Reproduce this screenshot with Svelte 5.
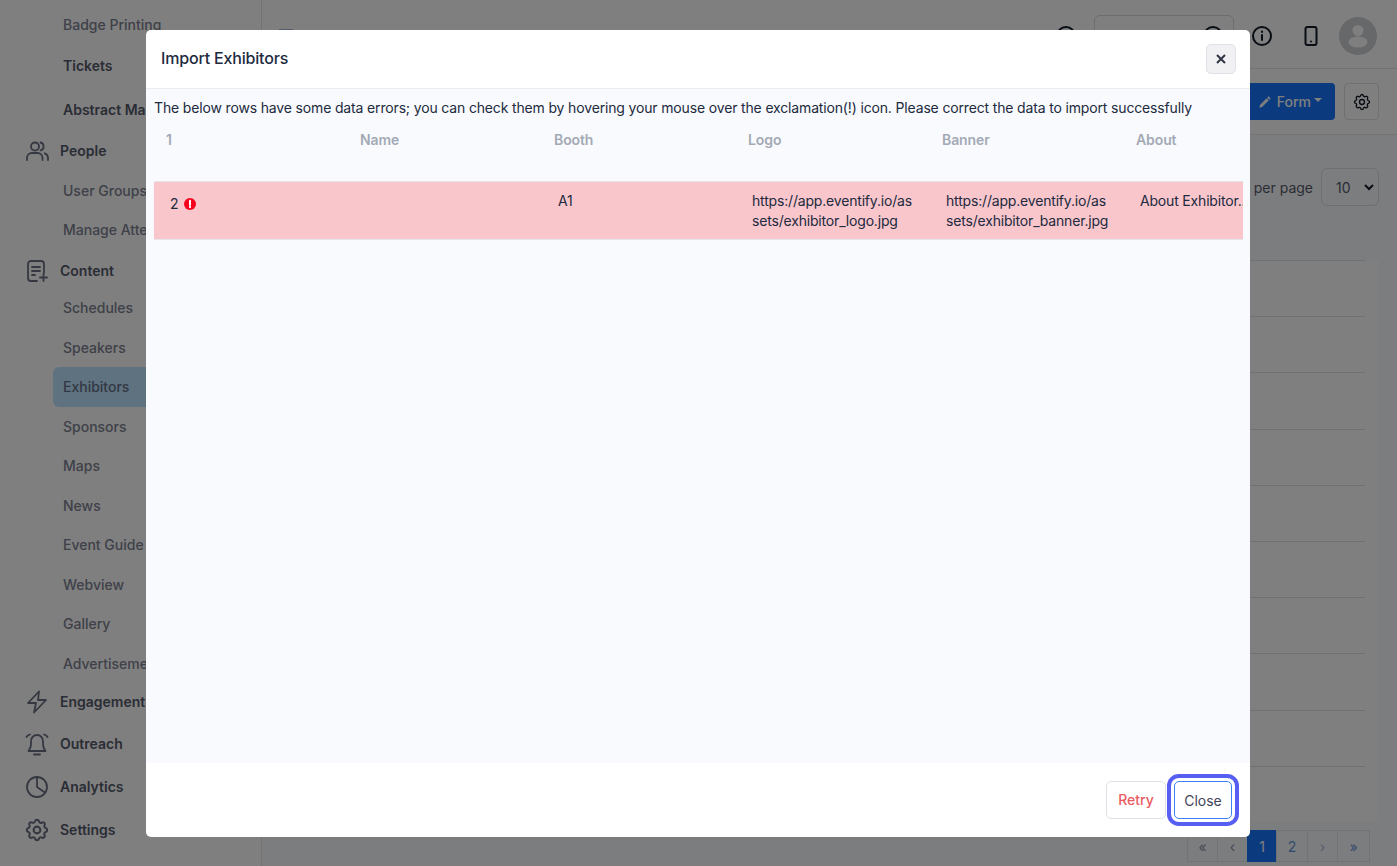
<script>
	const subTop = ["Badge Printing"];
	const people = ["User Groups", "Manage Attendees"];
	const content = ["Schedules", "Speakers", "Exhibitors", "Sponsors", "Maps", "News", "Event Guide", "Webview", "Gallery", "Advertisements"];
	const headers = ["1", "Name", "Booth", "Logo", "Banner", "About"];
	const rows = Array.from({ length: 10 });
	const pages = ["«", "‹", "1", "2", "›", "»"];
</script>

<div class="page">
	<aside class="sidebar">
		<div class="sub first">{subTop[0]}</div>
		<div class="plain tickets">Tickets</div>
		<div class="plain abstract">Abstract Management</div>

		<div class="top people">
			<svg viewBox="0 0 24 24"><circle cx="10" cy="7.500" r="4"/><path d="M2 21v-2a5 5 0 0 1 5-5h5.500a5 5 0 0 1 5 5v2M15.500 3.500a4 4 0 0 1 0 7.800M23 21v-2a5 5 0 0 0-3.200-4.700"/></svg>
			<span>People</span>
		</div>
		{#each people as item}
			<div class="sub">{item}</div>
		{/each}

		<div class="top content">
			<svg viewBox="0 0 24 24"><path d="M12 22H6a3 3 0 0 1-3-3V5a3 3 0 0 1 3-3h10a3 3 0 0 1 3 3v9M7 8h8M7 12h8M7 16h3M15 18.500h7M18.500 15v7"/></svg>
			<span>Content</span>
		</div>
		<div class="content-list">
			{#each content as item}
				<div class="sub" class:active={item === "Exhibitors"}>{item}</div>
			{/each}
		</div>

		<div class="top eng">
			<svg viewBox="0 0 24 24"><path d="M14 1.500L3 13h8l-2 9.500L21 10h-8z"/></svg>
			<span>Engagement</span>
		</div>
		<div class="top">
			<svg viewBox="0 0 24 24"><path d="M12 3a6 6 0 0 1 6 6v3.500c0 2.500 1 4.500 2.500 6.500h-17C5 17 6 15 6 12.500V9a6 6 0 0 1 6-6zM9 22.500h6M1.500 5C2 4 3 3 5 2.500M22.500 5C22 4 21 3 19 2.500"/></svg>
			<span>Outreach</span>
		</div>
		<div class="top">
			<svg viewBox="0 0 24 24"><circle cx="12" cy="12" r="10"/><path d="M12 2v10l8.200 5.800"/></svg>
			<span>Analytics</span>
		</div>
		<div class="top">
			<svg viewBox="0 0 24 24"><g transform="translate(12 12) scale(1.130) translate(-12 -12)"><path d="M10.300 4.300c.4-1.800 3-1.800 3.400 0a1.700 1.700 0 0 0 2.600 1.100c1.500-.9 3.300.8 2.400 2.400a1.700 1.700 0 0 0 1 2.500c1.800.4 1.800 3 0 3.400a1.700 1.700 0 0 0-1 2.600c.9 1.500-.9 3.300-2.400 2.400a1.700 1.700 0 0 0-2.600 1c-.4 1.800-3 1.800-3.400 0a1.700 1.700 0 0 0-2.600-1c-1.500.9-3.300-.9-2.400-2.400a1.700 1.700 0 0 0-1-2.600c-1.800-.4-1.800-3 0-3.400a1.700 1.700 0 0 0 1-2.500c-.9-1.600.9-3.300 2.400-2.400 1 .6 2.300.1 2.600-1.100z"/><circle cx="12" cy="12" r="3"/></g></svg>
			<span>Settings</span>
		</div>
	</aside>

	<main class="main">
		<header class="topbar">
			<svg class="menu" viewBox="0 0 24 24"><path d="M3 5h14M3 12h14M3 19h14"/></svg>
			<div class="spacer"></div>
			<svg class="tb-icon search-ic" viewBox="0 0 24 24"><circle cx="12" cy="12" r="9"/></svg>
			<div class="search"><svg viewBox="0 0 24 24"><circle cx="12" cy="12" r="9"/></svg></div>
			<svg class="tb-icon info" viewBox="0 0 24 24"><circle cx="12" cy="12" r="9"/><path d="M12 11v5M12 7.500v.5"/></svg>
			<svg class="tb-icon phone" viewBox="0 0 24 24"><rect x="6.500" y="3" width="11" height="18" rx="2"/><path d="M12 17.500v.1"/></svg>
			<div class="avatar">
				<svg viewBox="0 0 38 38"><circle cx="19" cy="13.500" r="5.500"/><ellipse cx="19" cy="25" rx="9.500" ry="5.500"/></svg>
			</div>
		</header>

		<div class="toolbar">
			<button class="form-btn">
				<svg viewBox="0 0 16 16"><path d="M12.100 1.500l2.400 2.400-1.500 1.500-2.400-2.400zM9.900 3.700l2.400 2.400-7.600 7.600-3.200.8.800-3.200z"/></svg>
				Form
				<i class="caret"></i>
			</button>
			<button class="gear-btn">
				<svg viewBox="0 0 24 24"><path d="M10.300 4.300c.4-1.800 3-1.800 3.400 0a1.700 1.700 0 0 0 2.600 1.100c1.500-.9 3.300.8 2.400 2.400a1.700 1.700 0 0 0 1 2.500c1.800.4 1.800 3 0 3.400a1.700 1.700 0 0 0-1 2.600c.9 1.500-.9 3.300-2.400 2.400a1.700 1.700 0 0 0-2.600 1c-.4 1.800-3 1.800-3.400 0a1.700 1.700 0 0 0-2.600-1c-1.500.9-3.300-.9-2.400-2.400a1.700 1.700 0 0 0-1-2.600c-1.800-.4-1.800-3 0-3.400a1.700 1.700 0 0 0 1-2.500c-.9-1.600.9-3.300 2.400-2.400 1 .6 2.300.1 2.600-1.100z"/><circle cx="12" cy="12" r="3"/></svg>
			</button>
		</div>

		<div class="filters">
			<span>Exhibitors per page</span>
			<div class="select">10<svg viewBox="0 0 12 12"><path d="M2 4l4 4 4-4"/></svg></div>
		</div>

		<div class="list">
			{#each rows as _}
				<div class="list-row"></div>
			{/each}
		</div>

		<nav class="pager">
			{#each pages as p, i}
				<span class:on={p === "1"} class:num={i > 2 && p !== "›"} class:dim={p === "›"}>{p}</span>
			{/each}
		</nav>
	</main>

	<div class="backdrop"></div>

	<section class="modal">
		<div class="modal-head">
			<h5>Import Exhibitors</h5>
			<button class="x" aria-label="Close">
				<svg viewBox="0 0 12 12"><path d="M2 2l8 8M10 2l-8 8"/></svg>
			</button>
		</div>
		<div class="modal-body">
			<p>The below rows have some data errors; you can check them by hovering your mouse over the exclamation(!) icon. Please correct the data to import successfully</p>
			<div class="tbl">
				<div class="tr th">
					{#each headers as h}
						<div class="cell">{h}</div>
					{/each}
				</div>
				<div class="tr err">
					<div class="cell idx">2
						<svg viewBox="0 0 12 12"><circle cx="6" cy="6" r="6"/><path d="M6 2.700v4M6 8.600v.6"/></svg>
					</div>
					<div class="cell"></div>
					<div class="cell">A1</div>
					<div class="cell">https://app.eventify.io/assets/exhibitor_logo.jpg</div>
					<div class="cell">https://app.eventify.io/assets/exhibitor_banner.jpg</div>
					<div class="cell about">About Exhibitor...</div>
				</div>
			</div>
		</div>
		<div class="modal-foot">
			<button class="retry">Retry</button>
			<button class="close">Close</button>
		</div>
	</section>
</div>

<style>
	:global(body) {
		margin: 0;
		font-family: "Inter", "Liberation Sans", sans-serif;
		overflow: hidden;
	}
	.page {
		position: relative;
		width: 1397px;
		height: 866px;
		display: flex;
		overflow: hidden;
		background: #f9fafe;
		color: #212a3e;
	}
	button {
		font-family: inherit;
	}

	.sidebar {
		width: 262px;
		height: 866px;
		flex: none;
		box-sizing: border-box;
		background: #fff;
		border-right: 1px solid #e4e6eb;
		overflow: hidden;
		padding-top: 5px;
	}
	.sub, .plain {
		height: 39.500px;
		line-height: 39.500px;
		margin-left: 53px;
		padding-left: 10px;
		font-size: 14px;
		font-weight: 500;
		color: #7d8292;
		white-space: nowrap;
		border-radius: 6px;
	}
	.sub.first {
		line-height: 40px;
	}
	.plain {
		height: 42px;
		line-height: 42px;
		font-weight: 600;
		color: #555a6b;
	}
	.plain.tickets {
		height: 44.500px;
		line-height: 42px;
	}
	.plain.abstract {
		line-height: 42.500px;
	}
	.sub.active {
		background: #bde5ff;
		color: #66708a;
	}
	.content-list {
		margin-top: -2.200px;
	}
	.top {
		height: 43px;
		display: flex;
		align-items: center;
		gap: 11px;
		padding-left: 25px;
		font-size: 14px;
		font-weight: 600;
		color: #555a6b;
	}
	.top.people {
		height: 39.500px;
	}
	.top.content {
		height: 40px;
		margin-top: 1px;
	}
	.top.eng {
		height: 36.700px;
		margin-bottom: 2.250px;
	}
	.top svg {
		width: 24px;
		height: 24px;
		fill: none;
		stroke: #6a7083;
		stroke-width: 1.800;
		stroke-linecap: round;
		stroke-linejoin: round;
	}

	.main {
		flex: 1;
		min-width: 0;
		display: flex;
		flex-direction: column;
	}
	.topbar {
		height: 69px;
		box-sizing: border-box;
		border-bottom: 1px solid #e4e6eb;
		display: flex;
		align-items: center;
		padding: 3px 20px 0 14px;
		background: #fff;
	}
	.menu {
		width: 24px;
		height: 24px;
		margin-top: 2px;
		fill: none;
		stroke: #a9bbdc;
		stroke-width: 2;
	}
	.spacer {
		flex: 1;
	}
	.tb-icon {
		width: 24px;
		height: 24px;
		fill: none;
		stroke: #111827;
		stroke-width: 2;
		stroke-linecap: round;
	}
	.search-ic {
		margin-right: 16px;
	}
	.search {
		width: 140px;
		height: 42px;
		box-sizing: border-box;
		border: 1px solid #d8dbe2;
		border-radius: 6px;
		display: flex;
		align-items: center;
		justify-content: flex-end;
		padding-right: 8px;
		margin-right: 16px;
	}
	.search svg {
		width: 24px;
		height: 24px;
		fill: none;
		stroke: #111827;
		stroke-width: 2;
	}
	.info {
		margin-right: 25px;
	}
	.phone {
		margin-right: 16px;
	}
	.avatar {
		width: 38px;
		height: 38px;
		border-radius: 50%;
		background: #cfd0d4;
		overflow: hidden;
	}
	.avatar svg {
		display: block;
		width: 38px;
		height: 38px;
		fill: #fff;
	}

	.toolbar {
		height: 66px;
		box-sizing: border-box;
		border-bottom: 1px solid #e4e6eb;
		display: flex;
		justify-content: flex-end;
		align-items: flex-start;
		gap: 9px;
		padding: 14px 18px 0 0;
		background: #fff;
	}
	.form-btn {
		width: 120px;
		height: 37px;
		border: 0;
		border-radius: 4px;
		background: #1774fe;
		color: #fff;
		font-size: 14px;
		font-weight: 500;
		display: flex;
		align-items: center;
		justify-content: flex-end;
		gap: 3px;
		padding: 0 13px 0 0;
	}
	.form-btn svg {
		width: 14px;
		height: 14px;
		margin-right: 2px;
		fill: #fff;
	}
	.caret {
		border-top: 4px solid #fff;
		border-left: 4px solid transparent;
		border-right: 4px solid transparent;
		margin-bottom: 3px;
	}
	.gear-btn {
		width: 35px;
		height: 37px;
		padding: 0;
		border: 1px solid #dfe1e6;
		border-radius: 4px;
		background: #fff;
		display: flex;
		align-items: center;
		justify-content: center;
	}
	.gear-btn svg {
		width: 20px;
		height: 20px;
		fill: none;
		stroke: #111827;
		stroke-width: 1.600;
	}

	.filters {
		display: flex;
		justify-content: flex-end;
		align-items: center;
		gap: 8px;
		padding: 33px 18px 0 0;
		font-size: 14px;
		color: #555a6b;
	}
	.select {
		width: 58px;
		height: 38px;
		box-sizing: border-box;
		border: 1px solid #dcdfe5;
		border-radius: 6px;
		display: flex;
		align-items: center;
		justify-content: space-between;
		padding: 0 3px 0 14px;
		font-size: 14px;
		color: #555a6b;
	}
	.select svg {
		width: 12px;
		height: 12px;
		fill: none;
		stroke: #111827;
		stroke-width: 2;
	}

	.list {
		margin: 54px 18px 0 16px;
		background: #fff;
		padding-right: 14px;
	}
	.list-row {
		height: 56.200px;
		box-sizing: border-box;
		border-top: 1px solid #dfe1e6;
	}
	.pager {
		display: flex;
		justify-content: flex-end;
		margin: auto 27px 4px 0;
		font-size: 14px;
	}
	.pager span {
		width: 31px;
		height: 32px;
		box-sizing: border-box;
		display: flex;
		align-items: center;
		justify-content: center;
		border: 1px solid #e4e6eb;
		margin-left: -1px;
		color: #8d93a0;
	}
	.pager span.on {
		width: 30px;
		background: #1774fe;
		color: #fff;
		border-color: #1774fe;
	}
	.pager span.num {
		width: 32px;
		color: #5f97dc;
	}
	.pager span:last-child {
		width: 33px;
	}
	.pager span.dim {
		color: #a8c0de;
	}

	.backdrop {
		position: absolute;
		inset: 0;
		background: rgba(0, 0, 0, 0.5);
	}

	.modal {
		position: absolute;
		left: 146px;
		top: 30px;
		width: 1104px;
		height: 807px;
		display: flex;
		flex-direction: column;
		background: #fff;
		border-radius: 5px;
		overflow: hidden;
	}
	.modal-head {
		height: 59px;
		flex: none;
		box-sizing: border-box;
		border-bottom: 1px solid #e9ebf0;
		display: flex;
		align-items: center;
		justify-content: space-between;
		padding: 0 14px 0 15px;
	}
	h5 {
		margin: -2px 0 0;
		font-size: 16px;
		font-weight: 500;
		letter-spacing: -0.180px;
		color: #212a3e;
	}
	.x {
		width: 30px;
		height: 30px;
		padding: 0;
		display: flex;
		align-items: center;
		justify-content: center;
		background: #f1f1f3;
		border: 1px solid #dfe1e6;
		border-radius: 5px;
	}
	.x svg {
		width: 12px;
		height: 12px;
		fill: none;
		stroke: #2f3545;
		stroke-width: 2;
	}
	.modal-body {
		flex: 1;
		background: #f9fafd;
		padding: 0 7px 0 8px;
		min-height: 0;
	}
	p {
		margin: 0;
		height: 32px;
		line-height: 38px;
		font-size: 14px;
		letter-spacing: -0.155px;
		color: #212a3e;
		white-space: nowrap;
	}
	.tbl {
		overflow: hidden;
	}
	.tr {
		display: flex;
		width: 1164px;
	}
	.cell {
		width: 194px;
		flex: none;
		box-sizing: border-box;
		font-size: 14px;
		line-height: 20px;
	}
	.th {
		height: 61px;
		border-bottom: 1px solid #e4e6eb;
		box-sizing: border-box;
	}
	.th .cell {
		padding: 9px 12px 0;
		font-weight: 600;
		letter-spacing: -0.100px;
		color: #a3aab6;
	}
	.err {
		height: 58px;
		background: #f9c6cc;
		border-bottom: 1px solid #e4e6eb;
		box-sizing: border-box;
	}
	.err .cell {
		padding: 9px 12px 0 16px;
		word-break: break-all;
		letter-spacing: -0.180px;
		color: #212a3e;
	}
	.err .idx {
		padding-top: 12px;
		display: flex;
		align-items: flex-start;
		gap: 6px;
	}
	.idx svg {
		width: 12px;
		height: 12px;
		margin-top: 4px;
		fill: #f5051d;
		stroke: #fff;
		stroke-width: 2;
		stroke-linecap: round;
	}
	.idx svg circle {
		stroke: none;
	}
	.about {
		white-space: nowrap;
	}
	.modal-foot {
		height: 74px;
		flex: none;
		display: flex;
		justify-content: flex-end;
		align-items: flex-start;
		gap: 8px;
		padding: 18px 18px 0 0;
		box-sizing: border-box;
	}
	.modal-foot button {
		height: 38px;
		box-sizing: border-box;
		font-size: 14px;
		font-weight: 400;
		background: #fff;
		border-radius: 5px;
		padding: 0;
	}
	.modal-foot .retry {
		width: 60px;
		border: 1px solid #dfe1e8;
		color: #ea5a5f;
		font-weight: 500;
		padding-bottom: 2px;
	}
	.close {
		width: 58px;
		border: 1px solid #3b82f6;
		color: #3f4456;
		box-shadow: 0 0 0 3px #fff, 0 0 0 7px #575ff2;
	}
</style>
